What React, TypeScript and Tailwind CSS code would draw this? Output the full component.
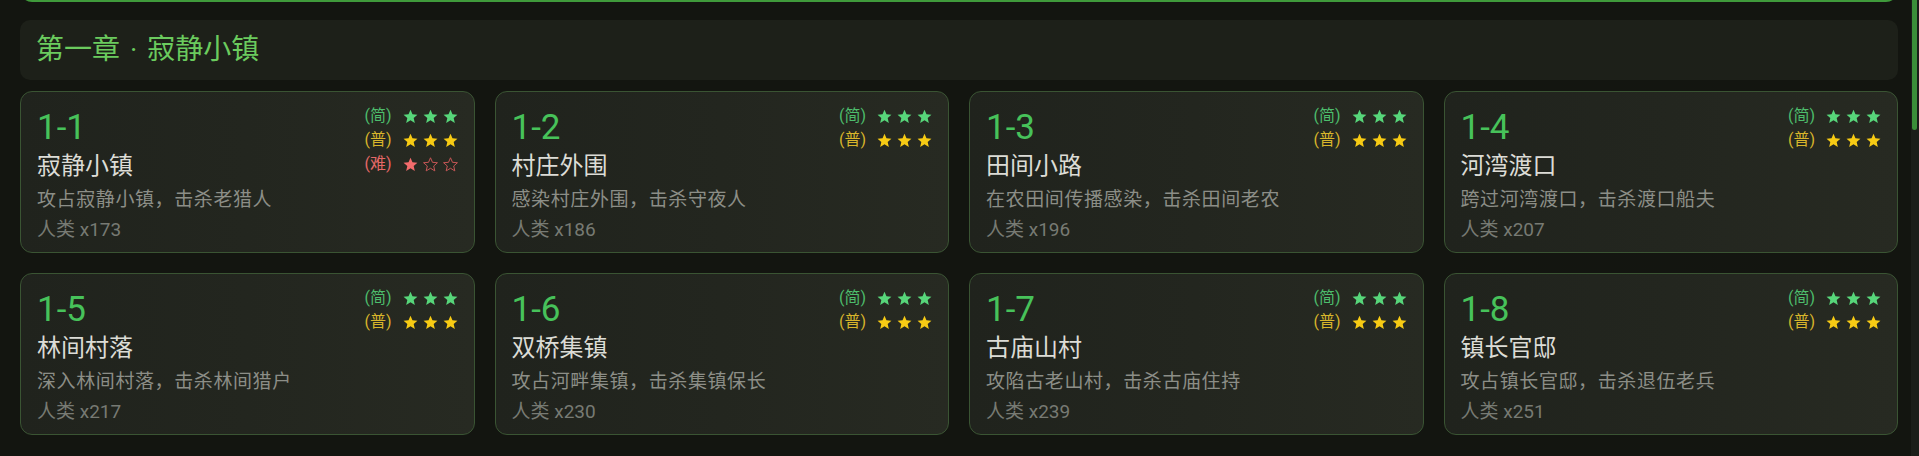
import React from "react";

type Level = {
  id: string;
  name: string;
  desc: string;
  count: number;
  stars: { easy: number; normal: number; hard?: number };
};

const levels: Level[] = [
  { id: "1-1", name: "寂静小镇", desc: "攻占寂静小镇，击杀老猎人", count: 173, stars: { easy: 3, normal: 3, hard: 1 } },
  { id: "1-2", name: "村庄外围", desc: "感染村庄外围，击杀守夜人", count: 186, stars: { easy: 3, normal: 3 } },
  { id: "1-3", name: "田间小路", desc: "在农田间传播感染，击杀田间老农", count: 196, stars: { easy: 3, normal: 3 } },
  { id: "1-4", name: "河湾渡口", desc: "跨过河湾渡口，击杀渡口船夫", count: 207, stars: { easy: 3, normal: 3 } },
  { id: "1-5", name: "林间村落", desc: "深入林间村落，击杀林间猎户", count: 217, stars: { easy: 3, normal: 3 } },
  { id: "1-6", name: "双桥集镇", desc: "攻占河畔集镇，击杀集镇保长", count: 230, stars: { easy: 3, normal: 3 } },
  { id: "1-7", name: "古庙山村", desc: "攻陷古老山村，击杀古庙住持", count: 239, stars: { easy: 3, normal: 3 } },
  { id: "1-8", name: "镇长官邸", desc: "攻占镇长官邸，击杀退伍老兵", count: 251, stars: { easy: 3, normal: 3 } },
];

const STAR_POINTS = "12,2.5 14.8,8.9 21.8,9.5 16.5,14.1 18.1,21 12,17.3 5.9,21 7.5,14.1 2.2,9.5 9.2,8.9";

function Star({ filled, color }: { filled: boolean; color: string }) {
  return (
    <svg viewBox="0 0 24 24" className="h-[17px] w-[17px]">
      <polygon
        points={STAR_POINTS}
        fill={filled ? color : "none"}
        stroke={color}
        strokeWidth={filled ? 0 : 1.4}
        strokeLinejoin="round"
      />
    </svg>
  );
}

function StarRow({
  label,
  value,
  labelClass,
  color,
  emptyColor,
}: {
  label: string;
  value: number;
  labelClass: string;
  color: string;
  emptyColor?: string;
}) {
  return (
    <div className="flex h-6 items-center justify-end gap-[10px]">
      <span className={`text-[16px] leading-none ${labelClass}`}>({label})</span>
      <div className="flex items-center gap-[3px]">
        {[0, 1, 2].map((i) => (
          <Star key={i} filled={i < value} color={i < value ? color : emptyColor ?? color} />
        ))}
      </div>
    </div>
  );
}

function LevelCard({ level }: { level: Level }) {
  return (
    <div className="flex h-[162px] rounded-xl border border-[#3a5433] bg-gradient-to-r from-[#20231d] via-[#23261f] to-[#272a22] pb-[9px] pl-4 pr-[15px] pt-4">
      <div className="flex min-w-0 flex-1 flex-col">
        <div className="text-[35px] leading-[40px] text-[#47c25a]">{level.id}</div>
        <div className="mt-[2px] text-[24px] leading-8 text-[#dcdcd6]">{level.name}</div>
        <div className="mt-1 text-[19px] leading-7 tracking-[0.6px] text-[#8c8e87]">{level.desc}</div>
        <div className="mt-[3px] text-[19px] leading-[26px] text-[#777a73]">人类 x{level.count}</div>
      </div>
      <div className="-mt-1 flex flex-col">
        <StarRow label="简" value={level.stars.easy} labelClass="text-[#4dbd6c]" color="#57d67a" />
        <StarRow label="普" value={level.stars.normal} labelClass="text-[#d8b52b]" color="#f7cb14" />
        {level.stars.hard !== undefined && (
          <StarRow
            label="难"
            value={level.stars.hard}
            labelClass="text-[#e56868]"
            color="#f26b6b"
            emptyColor="#c65656"
          />
        )}
      </div>
    </div>
  );
}

export default function App() {
  return (
    <div className="flex h-[456px] w-full overflow-hidden bg-[#131510] font-[Roboto,'Noto_Sans_CJK_SC',sans-serif]">
      <main className="flex min-w-0 flex-1 flex-col pl-5 pr-[13px]">
        {/* tail of the previous chapter block, scrolled above */}
        <div className="-mt-[10px] h-3 rounded-b-xl border-x border-b-2 border-[#3f9a3b] bg-[#1a1d17]" />

        <div className="mt-[18px] flex h-[60px] items-center rounded-[10px] bg-[#1d2019] px-4">
          <h2 className="flex items-center text-[28px] leading-none text-[#6bcb5e]">
            <span>第一章</span>
            <span className="mx-[10px]">·</span>
            <span>寂静小镇</span>
          </h2>
        </div>

        <div className="mt-[11px] grid grid-cols-4 gap-5">
          {levels.map((lv) => (
            <LevelCard key={lv.id} level={lv} />
          ))}
        </div>
      </main>

      {/* scrollbar */}
      <div className="flex w-2 flex-col bg-[#1b1e19] px-[1px]">
        <div className="h-[130px] w-[5px] rounded-b-full bg-[#3b8f39]" />
      </div>
    </div>
  );
}
